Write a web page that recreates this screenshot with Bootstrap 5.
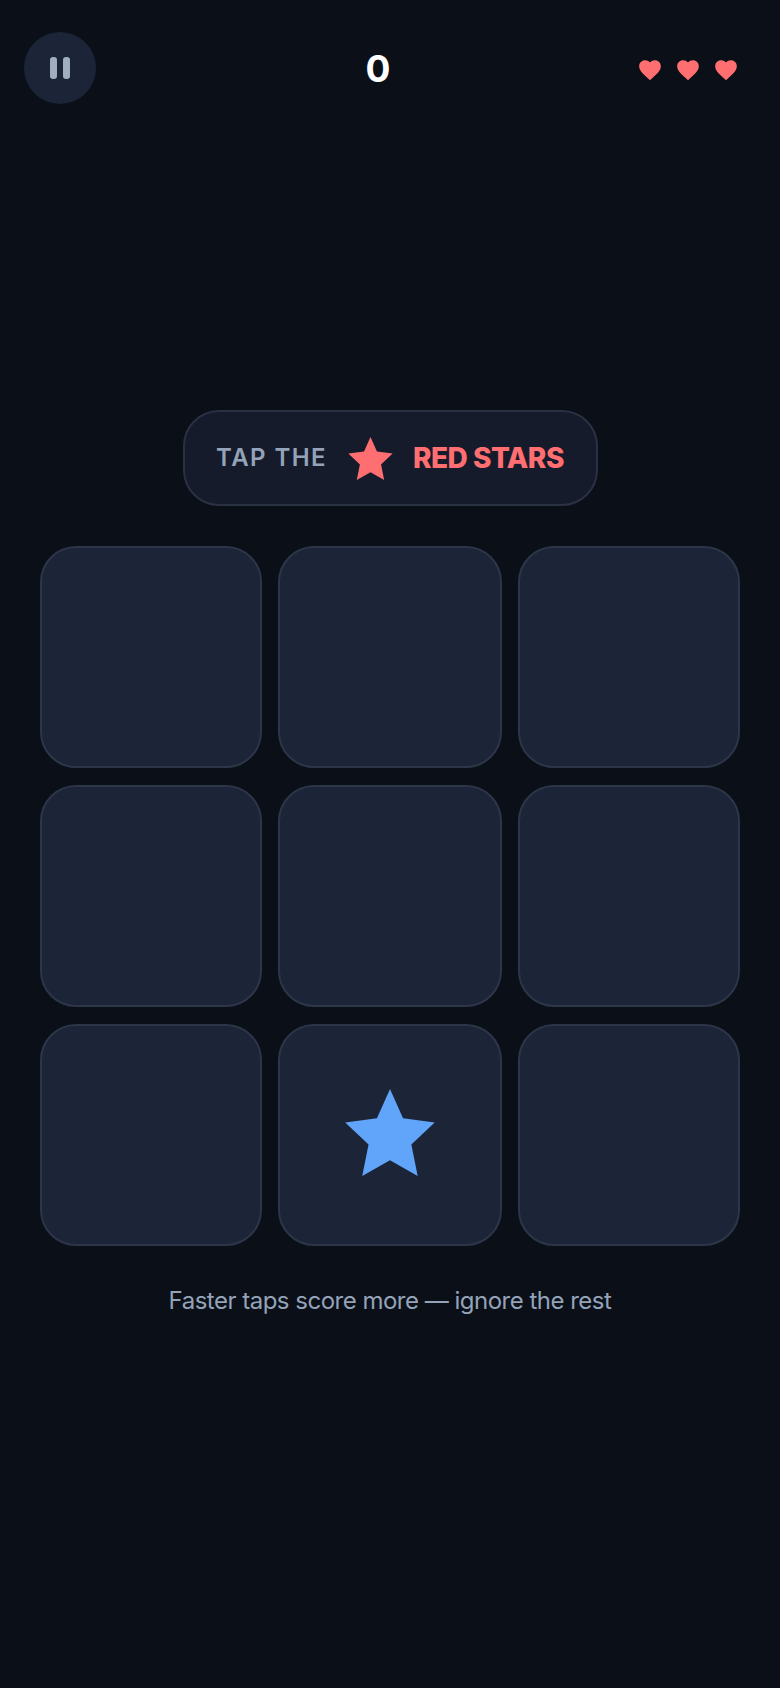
<!DOCTYPE html>
<html lang="en">
<head>
<meta charset="utf-8">
<title>Tap the red stars</title>
<link href="https://cdn.jsdelivr.net/npm/bootstrap@5.3.0/dist/css/bootstrap.min.css" rel="stylesheet">
<style>
html,body{height:100%}
body{background:#0a0f18;font-family:Inter,"Noto Sans",sans-serif;width:780px;height:1688px;overflow:hidden}
.game-top{height:72px;margin:32px 41px 0 24px}
.pause-btn{width:72px;height:72px;border-radius:50%;background:#1c2438;border:0;padding:0;gap:6px}
.pause-btn i{display:block;width:7px;height:22px;border-radius:3px;background:#a0aec0}
.score-val{margin-left:22px;padding-top:2px;font-size:37px;font-weight:700;color:#fff;line-height:72px;letter-spacing:-1px}
.lives{gap:12px;padding-top:4px}
.lives svg{width:26px;height:26px;display:block}
.prompt-wrap{margin-top:306px}
.prompt-pill{width:415px;height:96px;border-radius:36px;background:#161b2b;border:2px solid #2a3142}
.prompt-lead{font-size:24px;font-weight:600;letter-spacing:1.400px;color:#94a3b8}
.prompt-goal{font-size:28px;font-weight:800;color:#ff6f71;letter-spacing:-.5px}
.prompt-star{width:45px;height:43px;display:block;margin:0 20px 0 21px}
.cells{display:grid;grid-template-columns:221.700px 223.400px 221.700px;gap:17.300px 16.600px;margin:40px 0 0 40px}
.cell-box{height:221.700px;border-radius:36px;background:#1c2438;border:2px solid #2d3648}
.cell-box svg{width:90px;height:87px;display:block;margin-bottom:4px}
.hint-line{margin-top:37.500px;font-size:24px;line-height:36px;color:#94a3b8;text-align:center;font-weight:400;letter-spacing:-.5px}
</style>
</head>
<body>
<div class="game-top d-flex align-items-center justify-content-between">
  <button class="pause-btn btn d-flex align-items-center justify-content-center" aria-label="Pause"><i></i><i></i></button>
  <div class="score-val">0</div>
  <div class="lives d-flex align-items-center">
    <svg viewBox="0 0 24 24"><path fill="#ff6f71" d="M12 21.350l-1.450-1.320C5.400 15.360 2 12.280 2 8.500 2 5.420 4.420 3 7.500 3c1.740 0 3.410.81 4.500 2.090C13.090 3.810 14.760 3 16.500 3 19.580 3 22 5.420 22 8.500c0 3.780-3.400 6.860-8.550 11.540L12 21.350z"/></svg>
    <svg viewBox="0 0 24 24"><path fill="#ff6f71" d="M12 21.350l-1.450-1.320C5.400 15.360 2 12.280 2 8.500 2 5.420 4.420 3 7.500 3c1.740 0 3.410.81 4.500 2.090C13.090 3.810 14.760 3 16.500 3 19.580 3 22 5.420 22 8.500c0 3.780-3.400 6.860-8.550 11.540L12 21.350z"/></svg>
    <svg viewBox="0 0 24 24"><path fill="#ff6f71" d="M12 21.350l-1.450-1.320C5.400 15.360 2 12.280 2 8.500 2 5.420 4.420 3 7.500 3c1.740 0 3.410.81 4.500 2.090C13.090 3.810 14.760 3 16.500 3 19.580 3 22 5.420 22 8.500c0 3.780-3.400 6.860-8.550 11.540L12 21.350z"/></svg>
  </div>
</div>
<div class="prompt-wrap d-flex justify-content-center">
  <div class="prompt-pill d-flex align-items-center justify-content-center">
    <span class="prompt-lead">TAP THE</span>
    <svg class="prompt-star" viewBox="0 0 89.400 86.800"><polygon fill="#ff6f71" points="44.700,0 57.700,29.300 89.300,33.300 66,55.300 72.300,86.700 44.700,71 17,86.700 23.300,55.300 0,33.300 31.700,29.300"/></svg>
    <span class="prompt-goal">RED STARS</span>
  </div>
</div>
<div class="cells">
  <div class="cell-box"></div><div class="cell-box"></div><div class="cell-box"></div>
  <div class="cell-box"></div><div class="cell-box"></div><div class="cell-box"></div>
  <div class="cell-box"></div>
  <div class="cell-box d-flex align-items-center justify-content-center">
    <svg viewBox="0 0 89.400 86.800"><polygon fill="#60a5fa" points="44.700,0 57.700,29.300 89.300,33.300 66,55.300 72.300,86.700 44.700,71 17,86.700 23.300,55.300 0,33.300 31.700,29.300"/></svg>
  </div>
  <div class="cell-box"></div>
</div>
<div class="hint-line">Faster taps score more — ignore the rest</div>
<script src="https://cdn.jsdelivr.net/npm/bootstrap@5.3.0/dist/js/bootstrap.bundle.min.js"></script>
</body>
</html>
